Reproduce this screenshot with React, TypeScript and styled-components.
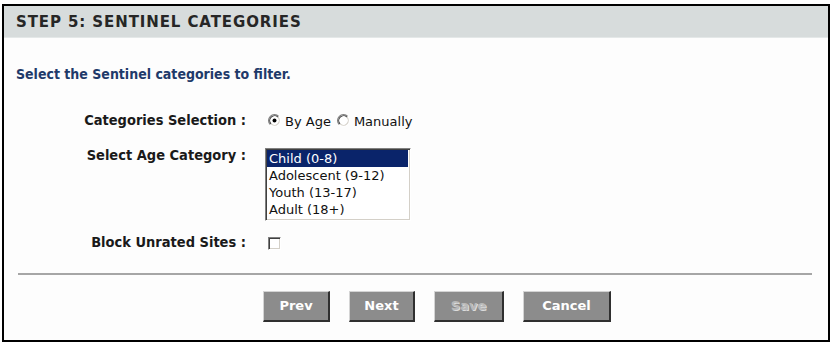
import styled, { createGlobalStyle } from "styled-components";

const GlobalStyle = createGlobalStyle`
  body {
    margin: 0;
    background: #fff;
    font-family: "DejaVu Sans", Verdana, sans-serif;
  }
`;

const Panel = styled.div`
  box-sizing: border-box;
  width: 828px;
  height: 338px;
  margin: 4px 0 0 2px;
  border: 2px solid #000;
  background: #fdfdfd;
`;

const Header = styled.h2`
  margin: 0;
  height: 32px;
  padding-left: 12px;
  background: #d7dcdc;
  border-bottom: 1px solid #e4e8e8;
  box-sizing: border-box;
  font-size: 15px;
  line-height: 32px;
  font-weight: bold;
  letter-spacing: 0.9px;
  color: #262626;
`;

const Intro = styled.p`
  margin: 28px 0 0 12px;
  font-family: "DejaVu Sans Condensed", "DejaVu Sans", sans-serif;
  font-size: 14px;
  line-height: 16px;
  font-weight: bold;
  color: #1f3a6a;
`;

const FieldRow = styled.div<{ $top: number }>`
  display: flex;
  align-items: flex-start;
  gap: 19px;
  margin-top: ${(p) => p.$top}px;
`;

const Label = styled.label`
  flex: 0 0 242px;
  text-align: right;
  font-family: "DejaVu Sans Condensed", "DejaVu Sans", sans-serif;
  font-size: 14.5px;
  line-height: 16px;
  font-weight: bold;
  color: #1a1a1a;
`;

const RadioGroup = styled.div`
  display: flex;
  align-items: center;
  padding-top: 2px;
  font-size: 13px;
  line-height: 16px;
  color: #111;
`;

const RadioOption = styled.span`
  display: inline-flex;
  align-items: center;
  margin-left: 3px;
  margin-right: 3px;

  svg {
    margin-right: 4px;
    margin-top: -3px;
  }
`;

const ListBox = styled.div`
  box-sizing: border-box;
  width: 146px;
  height: 73px;
  margin-top: 1px;
  padding: 1px 0;
  border-style: solid;
  border-width: 1px;
  border-color: #808080 #ffffff #ffffff #808080;
  box-shadow: inset 1px 1px 0 #404040, inset -1px -1px 0 #d4d0c8;
  background: #fff;
  overflow: hidden;
`;

const Option = styled.div<{ $selected?: boolean }>`
  margin: 0 2px 0 1px;
  padding-left: 2px;
  height: 17px;
  font-size: 13px;
  line-height: 17px;
  white-space: nowrap;
  color: ${(p) => (p.$selected ? "#fff" : "#111")};
  background: ${(p) => (p.$selected ? "#0a246a" : "transparent")};
`;

const CheckBox = styled.span`
  box-sizing: border-box;
  display: block;
  width: 13px;
  height: 13px;
  margin: 3px 0 0 3px;
  border-style: solid;
  border-width: 1px;
  border-color: #808080 #ffffff #ffffff #808080;
  box-shadow: inset 1px 1px 0 #404040, inset -1px -1px 0 #d4d0c8;
  background: #fff;
`;

const Divider = styled.hr`
  margin: 23px 16px 0 14px;
  height: 0;
  border: none;
  border-top: 2px solid #a6a6a6;
`;

const ButtonBar = styled.div`
  display: flex;
  gap: 19px;
  margin-top: 16px;
  padding-left: 259px;
`;

const Button = styled.button<{ $width: number }>`
  box-sizing: border-box;
  width: ${(p) => p.$width}px;
  height: 31px;
  padding: 0 0 1px;
  border-style: solid;
  border-width: 1px 2px 2px 1px;
  border-color: #d4d4d4 #303030 #303030 #d4d4d4;
  background: #8c8c8c;
  font-family: "DejaVu Sans", Verdana, sans-serif;
  font-size: 13px;
  font-weight: bold;
  color: #fff;

  &:disabled {
    color: #b8b8b8;
    text-shadow: 1px 1px 0 #dcdcdc;
  }
`;

function Radio({ checked }: { checked?: boolean }) {
  return (
    <svg width="13" height="13" viewBox="0 0 12 12">
      <circle cx="6" cy="6" r="4.2" fill="#fff" />
      <path d="M2.11 9.89 A5.5 5.5 0 0 1 9.89 2.11" fill="none" stroke="#808080" />
      <path d="M9.89 2.11 A5.5 5.5 0 0 1 2.11 9.89" fill="none" stroke="#fff" />
      <path d="M2.82 9.18 A4.5 4.5 0 0 1 9.18 2.82" fill="none" stroke="#404040" />
      <path d="M9.18 2.82 A4.5 4.5 0 0 1 2.82 9.18" fill="none" stroke="#d4d0c8" />
      {checked && <circle cx="6" cy="6" r="1.8" fill="#000" />}
    </svg>
  );
}

const ageCategories = ["Child (0-8)", "Adolescent (9-12)", "Youth (13-17)", "Adult (18+)"];

export default function App() {
  return (
    <>
      <GlobalStyle />
      <Panel>
        <Header>STEP 5: SENTINEL CATEGORIES</Header>
        <Intro>Select the Sentinel categories to filter.</Intro>

        <FieldRow $top={30}>
          <Label>Categories Selection :</Label>
          <RadioGroup>
            <RadioOption>
              <Radio checked />
              By Age
            </RadioOption>
            <RadioOption>
              <Radio />
              Manually
            </RadioOption>
          </RadioGroup>
        </FieldRow>

        <FieldRow $top={17}>
          <Label>Select Age Category :</Label>
          <ListBox role="listbox">
            {ageCategories.map((c, i) => (
              <Option key={c} $selected={i === 0}>
                {c}
              </Option>
            ))}
          </ListBox>
        </FieldRow>

        <FieldRow $top={13}>
          <Label>Block Unrated Sites :</Label>
          <CheckBox />
        </FieldRow>

        <Divider />

        <ButtonBar>
          <Button $width={67}>Prev</Button>
          <Button $width={66}>Next</Button>
          <Button $width={70} disabled>
            Save
          </Button>
          <Button $width={88}>Cancel</Button>
        </ButtonBar>
      </Panel>
    </>
  );
}
